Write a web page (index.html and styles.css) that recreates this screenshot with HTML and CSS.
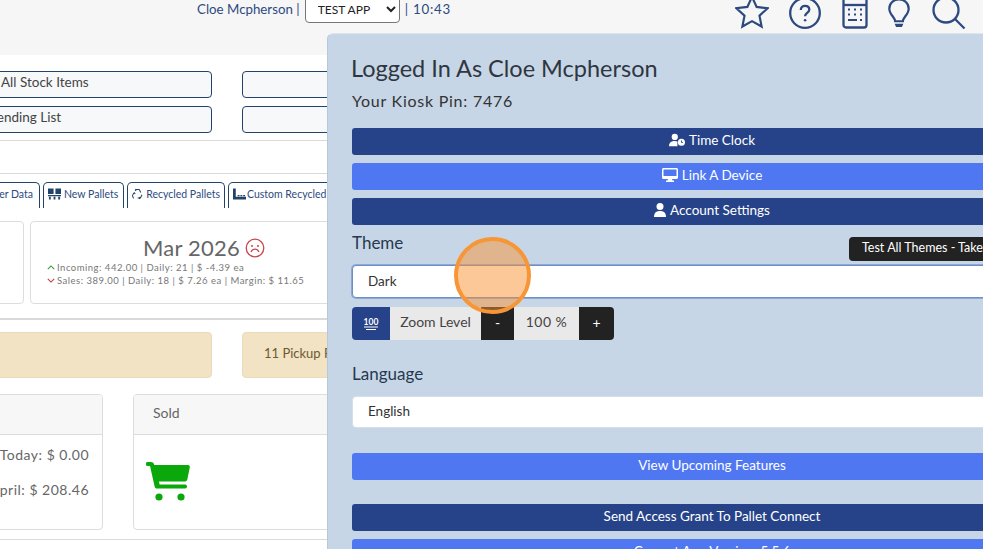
FILE: index.html
```html
<!DOCTYPE html>
<html lang="en">
<head>
<meta charset="utf-8">
<title>Account</title>
<link rel="stylesheet" href="styles.css">
</head>
<body>
<header class="topbar">
  <div class="user-line">
    <span>Cloe Mcpherson |</span>
    <select class="app-select"><option>TEST APP</option></select>
    <span class="clock">| 10:43</span>
  </div>
  <nav class="top-icons">
    <svg class="icon-star" viewBox="0 0 36 36"><path d="M18 2l4.900 10.600 11.600 1.400-8.600 7.900 2.300 11.500L18 27.700 7.800 33.400l2.300-11.500L1.500 14l11.600-1.400z"/></svg>
    <svg class="icon-help" viewBox="0 0 32 32"><circle cx="16" cy="16" r="14.800"/><path d="M11.800 13c0-2.600 1.900-4.200 4.300-4.200s4.200 1.500 4.200 3.800c0 3.300-4.200 3.400-4.200 6.600"/><circle class="dot" cx="16.100" cy="23.200" r="1.300"/></svg>
    <svg class="icon-calc" viewBox="0 0 26 34"><rect x="1.500" y="1.500" width="23" height="31" rx="2.500"/><path d="M1.500 10h23"/><path class="keys" d="M6 14.500h2M12 14.500h2M18 14.500h2M6 19.500h2M12 19.500h2M18 19.500h2M6 25h9M18 25h2"/></svg>
    <svg class="icon-bulb" viewBox="0 0 24 32"><path d="M8 24c0-4-6-7-6-13C2 5.500 6.500 1.500 12 1.500S22 5.500 22 11c0 6-6 9-6 13z"/><path class="bulb-base" d="M7.500 26.500h9l-1.500 3.500H9z"/></svg>
    <svg class="icon-search" viewBox="0 0 34 34"><circle cx="14" cy="14" r="12.500"/><path d="M23 23l9.500 9.500"/></svg>
  </nav>
</header>

<main class="page">
  <section class="link-grid">
    <button class="link-btn">All Stock Items</button>
    <button class="link-btn"></button>
    <button class="link-btn link-btn-alt">Pending List</button>
    <button class="link-btn"></button>
  </section>
  <hr class="rule rule-a">
  <hr class="rule rule-b">
  <ul class="tabs">
    <li class="tab tab-first">Customer Data</li>
    <li class="tab tab-new"><svg class="tab-icon" viewBox="0 0 14 12"><path d="M0 0h6v6H0zM8 0h6v6H8zM0 7h14v1.500H0zM1 9h2v3H1zM6 9h2v3H6zM11 9h2v3h-2z"/></svg>New Pallets</li>
    <li class="tab tab-rec"><svg class="tab-icon tab-recycle" viewBox="0 0 14 14"><path d="M5 1.500h4l2 3.500M12.500 8l-2 4H7M2 12.500 0.500 9l2-3.500M4 1l1 1-1 1M10 11l-1 1 1 1M1.500 7 3 5.500 4 7"/></svg>Recycled Pallets</li>
    <li class="tab tab-last"><svg class="tab-icon" viewBox="0 0 14 12"><path d="M0 0h3v9h11v3H0zM5 7h2v1.500H5zM8 7h2v1.500H8zM11 7h2v1.500h-2z"/></svg>Custom Recycled Pallets</li>
  </ul>
  <section class="stat-row">
    <article class="stat-card stat-prev"></article>
    <article class="stat-card">
      <h2 class="stat-title">Mar 2026 <svg class="face" viewBox="0 0 20 20"><circle cx="10" cy="10" r="8.800"/><path d="M6 14c1-2 2.500-2.800 4-2.800s3 .8 4 2.800"/><circle class="eye" cx="7" cy="8" r="1"/><circle class="eye" cx="13" cy="8" r="1"/></svg></h2>
      <p class="stat-line"><svg class="chev chev-up" viewBox="0 0 10 6"><path d="M1 5l4-4 4 4"/></svg>Incoming: 442.00 | Daily: 21 | $ -4.39 ea</p>
      <p class="stat-line"><svg class="chev chev-down" viewBox="0 0 10 6"><path d="M1 1l4 4 4-4"/></svg>Sales: 389.00 | Daily: 18 | $ 7.26 ea | Margin: $ 11.65</p>
    </article>
  </section>
  <hr class="rule rule-c">
  <section class="alert-grid">
    <div class="alert"></div>
    <div class="alert">11 Pickup Requests</div>
  </section>
  <section class="panel-row">
    <article class="info-card info-left">
      <div class="info-head"></div>
      <div class="info-body">
        <p>Today: $ 0.00</p>
        <p>April: $ 208.46</p>
      </div>
    </article>
    <article class="info-card info-sold">
      <div class="info-head">Sold</div>
      <div class="info-body">
        <svg class="cart" viewBox="0 0 44 40"><path d="M1 0h4c1.500 0 2.600.8 3 2.200L8.400 3H42c1.300 0 2 1 1.800 2.200l-2.400 12c-.3 1.500-1.500 2.300-3 2.300H13l.6 3H39c1.300 0 2 .8 2 2s-.7 2-2 2H11c-1.200 0-2-.6-2.300-1.800L4 4H1C.3 4 0 3 0 2s.3-2 1-2z"/><circle cx="13" cy="35" r="3.600"/><circle cx="35" cy="35" r="3.600"/></svg>
      </div>
    </article>
  </section>
  <hr class="rule rule-d">
</main>

<aside class="account">
  <h1 class="account-title">Logged In As Cloe Mcpherson</h1>
  <p class="account-pin">Your Kiosk Pin: 7476</p>
  <div class="btn-stack">
    <button class="btn btn-dark"><svg class="btn-icon" viewBox="0 0 18 14"><circle cx="6.500" cy="3.500" r="3.500"/><path d="M0 14c0-4 2.500-6 6.500-6 1.200 0 2.200.2 3 .6V14z"/><circle cx="14" cy="9.500" r="4"/><path class="clock-hand" d="M14 7.500v2.300h1.600"/></svg>Time Clock</button>
    <button class="btn btn-light"><svg class="btn-icon" viewBox="0 0 16 14"><path d="M1.500 0h13c.8 0 1.500.7 1.500 1.500v8c0 .8-.7 1.500-1.500 1.500H10l.4 1.500H12V14H4v-1.500h1.600L6 11H1.500C.7 11 0 10.300 0 9.500v-8C0 .7.700 0 1.500 0zm0 1.500V8h13V1.500z" fill-rule="evenodd"/></svg>Link A Device</button>
    <button class="btn btn-dark"><svg class="btn-icon btn-icon-user" viewBox="0 0 12 14"><circle cx="6" cy="3.500" r="3.500"/><path d="M0 14c0-4 2-6 6-6s6 2 6 6z"/></svg>Account Settings</button>
  </div>
  <label class="field-label field-theme">Theme</label>
  <select class="field field-focus"><option>Dark</option></select>
  <div class="zoom">
    <span class="zoom-icon"><svg viewBox="0 0 16 14"><text x="8" y="7.500" text-anchor="middle">100</text><path d="M1 10h14M3 12.500h10"/></svg></span>
    <span class="zoom-label">Zoom Level</span>
    <button class="zoom-btn">-</button>
    <span class="zoom-value">100 %</span>
    <button class="zoom-btn zoom-plus">+</button>
  </div>
  <label class="field-label field-lang">Language</label>
  <select class="field field-plain"><option>English</option></select>
  <button class="btn btn-light btn-gap">View Upcoming Features</button>
  <div class="btn-stack btn-gap-lg">
    <button class="btn btn-dark">Send Access Grant To Pallet Connect</button>
    <button class="btn btn-light">Current App Version: 5.5.6</button>
  </div>
  <div class="tooltip">Test All Themes - Takes A While</div>
</aside>
<div class="pointer"></div>
</body>
</html>
```
FILE: styles.css
```css
* { box-sizing: border-box; }
html, body { margin: 0; height: 549px; overflow: hidden; }
body {
  position: relative;
  background: #fff;
  font-family: "Lato", "Open Sans", sans-serif;
  color: #555;
  font-size: 14px;
}
p, h1, h2, ul { margin: 0; padding: 0; }

.topbar {
  height: 55px;
  background: #f6f6f6;
  display: flex;
  align-items: flex-start;
  padding-left: 197px;
  overflow: hidden;
}
.user-line {
  display: flex;
  flex: none;
  align-items: center;
  gap: 5px;
  width: 259px;
  height: 18px;
  color: #2c4a80;
  font-size: 13.300px;
  white-space: nowrap;
}
.clock { letter-spacing: .8px; }
.app-select {
  flex: none;
  width: 95px;
  height: 27px;
  margin-top: 1px;
  padding-left: 8px;
  background: #fff;
  border: 1px solid #777;
  border-radius: 4px;
  font: 12px "Lato", sans-serif;
  color: #222;
}
.top-icons { display: flex; flex: none; align-items: flex-start; margin-left: 279px; }
.top-icons svg { fill: none; stroke: #2c4a80; stroke-width: 2.300; flex: none; }
.icon-star { width: 34px; height: 34px; margin-top: -5px; }
.icon-help { width: 32px; height: 32px; margin: -3px 0 0 20px; }
.icon-calc { width: 26px; height: 34px; margin: -5px 0 0 21px; }
.icon-bulb { width: 24px; height: 31px; margin: -2px 0 0 19px; }
.icon-search { width: 34px; height: 34px; margin: -4px 0 0 21px; }
.dot { fill: #2c4a80; stroke: none; }
.bulb-base { fill: #2c4a80; stroke: none; }
.top-icons .keys { stroke-width: 2; }

.page { margin-left: -58px; width: 800px; }
.link-grid {
  display: grid;
  grid-template-columns: 270px 270px;
  column-gap: 30px;
  row-gap: 8px;
  padding-top: 16px;
}
.link-btn {
  height: 27px;
  padding: 0 0 6px 58px;
  text-align: left;
  background: #f6f8fa;
  border: 1px solid #23446a;
  border-radius: 4px;
  color: #444;
  font: 13.500px "Lato", sans-serif;
}
.link-btn-alt { padding-left: 46px; }
.rule { border: 0; border-top: 1px solid #d9d9d9; margin: 0; }
.rule-a { margin-top: 7px; }
.rule-b { margin-top: 32px; }
.rule-c { margin-top: 14px; border-top-width: 2px; }
.rule-d { margin-top: 9px; }

.tabs { display: flex; list-style: none; gap: 3px; margin-top: 8px; height: 26px; white-space: nowrap; }
.tab {
  display: flex;
  flex: none;
  align-items: center;
  height: 26px;
  padding: 0 4px 3px;
  border: 1px solid #23446a;
  border-bottom: 0;
  border-radius: 5px 5px 0 0;
  color: #2c4a80;
  font-size: 10.500px;
}
.tab-first { width: 98px; justify-content: flex-end; padding-right: 6px; }
.tab-new { width: 81px; }
.tab-rec { width: 98px; }
.tab-last .tab-icon { margin-right: 1px; }
.tab-icon { width: 13px; height: 12px; margin-right: 3px; fill: #23446a; }
.tab-recycle { fill: none; stroke: #23446a; stroke-width: 1.300; }

.stat-row { display: flex; gap: 6px; margin-top: 13px; }
.stat-card { height: 83px; width: 348px; background: #fff; border: 1px solid #ddd; border-radius: 4px; padding: 13px 16px 0; flex: none; }
.stat-prev { width: 82px; }
.stat-title { display: flex; justify-content: center; align-items: center; gap: 5px; font-size: 22px; font-weight: 400; color: #666; line-height: 26px; letter-spacing: .2px; }
.face { width: 20px; height: 20px; fill: none; stroke: #c8474f; stroke-width: 1.300; }
.face .eye { fill: #c8474f; stroke: none; }
.stat-line { font-size: 9.500px; line-height: 13px; color: #777; letter-spacing: .5px; display: flex; align-items: center; white-space: nowrap; }
.chev { width: 8px; height: 5px; margin-right: 2px; fill: none; stroke-width: 1.300; }
.chev-up { stroke: #2a9d3a; }
.chev-down { stroke: #c8343f; }

.alert-grid { display: grid; grid-template-columns: 270px 270px; column-gap: 30px; margin-top: 12px; }
.alert { height: 46px; background: #f1e3c3; border: 1px solid #eadcb9; border-radius: 4px; padding: 0 21px; line-height: 41px; color: #6d5a32; font-size: 13px; white-space: nowrap; }

.panel-row { display: flex; gap: 30px; margin-top: 16px; }
.info-card { height: 136px; background: #fff; border: 1px solid #ddd; border-radius: 4px; flex: none; overflow: hidden; }
.info-left { width: 161px; }
.info-sold { width: 400px; }
.info-head { height: 40px; background: #f7f7f7; border-bottom: 1px solid #ddd; padding-left: 19px; line-height: 35px; font-size: 14px; color: #666; }
.info-left .info-body { padding: 2px 13px 0 0; text-align: right; font-size: 14px; line-height: 35px; letter-spacing: .5px; color: #666; }
.info-sold .info-body { padding: 27px 0 0 12px; }
.cart { display: block; width: 44px; height: 40px; fill: #0aa80a; }

.account {
  position: absolute;
  left: 327px;
  top: 33px;
  width: 775px;
  height: 600px;
  background: #c6d6e6;
  border-top: 1px solid #dde6ef;
  border-left: 1px solid #b7c8da;
  border-radius: 6px 0 0 0;
  padding: 20px 0 0 24px;
  color: #333;
}
.account-title { font-size: 23.500px; font-weight: 400; line-height: 29px; margin-left: -1px; color: #2f3640; }
.account-pin { font-size: 16px; line-height: 20px; margin-top: 8px; color: #333; letter-spacing: .75px; }
.btn-stack { display: flex; flex-direction: column; gap: 8px; margin-top: 17px; width: 720px; }
.btn {
  display: flex;
  justify-content: center;
  align-items: center;
  gap: 4px;
  width: 720px;
  height: 27px;
  border: 0;
  border-radius: 3px;
  color: #fff;
  font: 13.500px "Lato", sans-serif;
  padding: 0 0 4px;
}
.btn-dark { background: #264389; }
.btn-light { background: #5077f2; }
.btn-icon { width: 16px; height: 14px; fill: #fff; }
.btn-icon-user { width: 12px; }
.clock-hand { fill: none; stroke: #264389; stroke-width: 1; }
.btn-gap { margin-top: 25px; }
.btn-gap-lg { margin-top: 24px; }

.field-label { display: block; font-size: 17px; line-height: 21px; color: #27384f; }
.field-theme { margin-top: 7px; }
.field-lang { margin-top: 23px; }
.field {
  display: block;
  width: 720px;
  appearance: none;
  background: #fff;
  padding-left: 15px;
  font: 13.500px "Lato", sans-serif;
  color: #333;
}
.field-focus { height: 33px; margin-top: 12px; border: 1px solid #6d8fc9; border-radius: 4px; box-shadow: 0 0 0 1px #8fa9d2; padding-bottom: 2px; }
.field-plain { height: 32px; margin-top: 12px; border: 1px solid #d5dfe9; border-radius: 4px; padding-bottom: 3px; }

.zoom { display: flex; width: 262px; height: 33px; margin-top: 9px; border-radius: 4px; overflow: hidden; align-items: stretch; font-size: 14px; color: #444; }
.zoom-icon { width: 38px; background: #264389; display: flex; align-items: center; justify-content: center; }
.zoom-icon svg { width: 16px; height: 14px; fill: #fff; stroke: #fff; }
.zoom-icon text { font: 700 8.500px "Lato", sans-serif; stroke: none; }
.zoom-label { width: 91px; background: #e9e9e9; text-align: center; line-height: 30px; }
.zoom-btn { width: 33px; background: #222; color: #fff; border: 0; padding: 0 0 2px; font: 14px "Lato", sans-serif; }
.zoom-plus { width: 35px; }
.zoom-value { width: 65px; background: #e9e9e9; text-align: center; line-height: 30px; letter-spacing: .5px; }

.tooltip {
  position: absolute;
  left: 521px;
  top: 203px;
  width: 300px;
  height: 24px;
  background: #222;
  border-radius: 4px;
  color: #fff;
  font-size: 12.500px;
  line-height: 22px;
  padding-left: 13px;
  white-space: nowrap;
}
.pointer {
  position: absolute;
  left: 454px;
  top: 237px;
  width: 77px;
  height: 77px;
  border-radius: 50%;
  border: 4px solid #f79636;
  background: rgba(250, 146, 50, .5);
}
```
